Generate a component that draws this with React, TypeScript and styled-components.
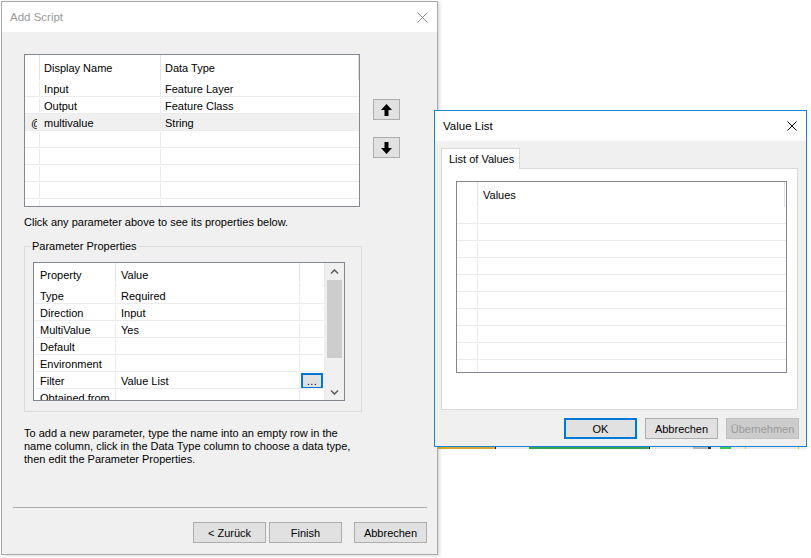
import React from 'react';
import styled, { createGlobalStyle } from 'styled-components';

const GlobalStyle = createGlobalStyle`
  * { box-sizing: border-box; }
  html, body { margin: 0; padding: 0; background: #ffffff; }
  body {
    font-family: "Liberation Sans", Arial, sans-serif;
    font-size: 11px;
    color: #000;
  }
`;

const Desktop = styled.div`
  position: relative;
  width: 811px;
  height: 558px;
  overflow: hidden;
  background: #fff;
`;

// windows sit on the desktop at their own coordinates
const Window = styled.div<{ $x: number; $y: number; $w: number; $h: number; $active?: boolean }>`
  position: absolute;
  left: ${p => p.$x}px;
  top: ${p => p.$y}px;
  width: ${p => p.$w}px;
  height: ${p => p.$h}px;
  display: flex;
  flex-direction: column;
  background: #f0f0f0;
  border: 1px solid ${p => (p.$active ? '#1883d7' : '#aaaaaa')};
  box-shadow: ${p => (p.$active ? 'none' : '2px 1px 3px rgba(0, 0, 0, 0.14)')};
`;

const TitleBar = styled.div<{ $active?: boolean }>`
  flex: none;
  height: 30px;
  display: flex;
  align-items: center;
  justify-content: space-between;
  padding: 0 9px 0 8px;
  background: #fff;
  color: ${p => (p.$active ? '#000' : '#999')};
  font-size: 11.5px;
`;

const CloseX = ({ size, color }: { size: number; color: string }) => (
  <svg width={size} height={size} viewBox={`0 0 ${size} ${size}`}>
    <path d={`M0.5 0.5 L${size - 0.5} ${size - 0.5} M${size - 0.5} 0.5 L0.5 ${size - 0.5}`} stroke={color} strokeWidth="1" />
  </svg>
);

const MainBody = styled.div`
  flex: 1;
  display: flex;
  flex-direction: column;
  padding: 22px 10px 0 11px;
`;

const TopSection = styled.div`
  display: flex;
  gap: 13px;
  margin-left: 11px;
`;

const ArrowStack = styled.div`
  display: flex;
  flex-direction: column;
  gap: 17px;
  padding-top: 45px;
`;

const ArrowButton = styled.div`
  width: 27px;
  height: 21px;
  border: 1px solid #adadad;
  background: #e1e1e1;
  display: flex;
  align-items: center;
  justify-content: center;
`;

const Caption = styled.div<{ $top: number }>`
  margin: ${p => p.$top}px 0 0 11px;
  line-height: 15px;
  white-space: nowrap;
`;

const HelpText = styled.div`
  margin: 15px 0 0 11px;
  line-height: 13px;
  white-space: nowrap;
`;

const GroupBox = styled.div`
  position: relative;
  margin: 16px 0 0 11px;
  width: 338px;
  height: 166px;
  border: 1px solid #dcdcdc;
  padding: 15px 0 0 8px;
`;

const GroupLabel = styled.span`
  position: absolute;
  top: -7px;
  left: 6px;
  padding: 0 1px;
  line-height: 13px;
  background: #f0f0f0;
`;

const Separator = styled.div`
  margin-top: 41px;
  height: 1px;
  background: #adadad;
`;

const ButtonRow = styled.div<{ $top: number; $right: number }>`
  display: flex;
  justify-content: flex-end;
  gap: 8px;
  margin-top: ${p => p.$top}px;
  padding-right: ${p => p.$right}px;
`;

const PushButton = styled.div<{ $focus?: boolean; $disabled?: boolean; $gapBefore?: number }>`
  width: 73px;
  height: 21px;
  flex: none;
  display: flex;
  align-items: center;
  justify-content: center;
  background: ${p => (p.$disabled ? '#cccccc' : '#e1e1e1')};
  border: ${p => (p.$focus ? '2px solid #0078d7' : `1px solid ${p.$disabled ? '#bfbfbf' : '#adadad'}`)};
  color: ${p => (p.$disabled ? '#9a9a9a' : '#000')};
  margin-left: ${p => p.$gapBefore ?? 0}px;
`;

/* data grids */
const GridBox = styled.div<{ $w: number; $h: number }>`
  flex: none;
  width: ${p => p.$w}px;
  height: ${p => p.$h}px;
  border: 1px solid #828790;
  background: #fff;
  overflow: hidden;
  display: flex;
`;

const GridColumn = styled.div`
  flex: 1;
  display: flex;
  flex-direction: column;
  min-width: 0;
`;

const HeaderRow = styled.div<{ $h: number }>`
  flex: none;
  display: flex;
  height: ${p => p.$h}px;
`;

const Row = styled.div<{ $selected?: boolean }>`
  flex: none;
  display: flex;
  height: 17px;
  padding-top: 1px;
  border-bottom: 1px solid #ececec;
  background: ${p => (p.$selected ? '#f0f0f0' : 'transparent')};
`;

const Cell = styled.div<{ $w?: number; $line?: 'head' | 'row'; $pad?: number }>`
  flex: ${p => (p.$w ? `0 0 ${p.$w}px` : '1 1 auto')};
  display: flex;
  align-items: center;
  padding-left: ${p => p.$pad ?? 4}px;
  border-right: ${p => (p.$line ? `1px solid ${p.$line === 'head' ? '#e3e3e3' : '#ececec'}` : 'none')};
  white-space: nowrap;
  overflow: hidden;
`;

const EditMark = styled.span`
  display: inline-block;
  width: 6px;
  overflow: hidden;
`;

const DotsButton = styled.div`
  width: 22px;
  height: 16px;
  margin: 0 0 0 1px;
  border: 2px solid #0078d7;
  background: #e1e1e1;
  display: flex;
  align-items: center;
  justify-content: center;
  line-height: 12px;
  font-size: 11px;
  letter-spacing: 0.5px;
`;

const ScrollBar = styled.div`
  flex: 0 0 19px;
  background: #f0f0f0;
  display: flex;
  flex-direction: column;
  align-items: center;
`;

const ScrollArrow = styled.div`
  flex: none;
  height: 17px;
  width: 100%;
  display: flex;
  align-items: center;
  justify-content: center;
`;

const ScrollThumb = styled.div`
  flex: none;
  width: 15px;
  height: 78px;
  background: #cdcdcd;
`;

const ScrollSpace = styled.div`
  flex: 1;
`;

const Chevron = ({ down }: { down?: boolean }) => (
  <svg width="9" height="6" viewBox="0 0 9 6">
    <path d={down ? 'M1 1.5 L4.5 5 L8 1.5' : 'M1 4.5 L4.5 1 L8 4.5'} stroke="#606060" strokeWidth="1.6" fill="none" />
  </svg>
);

const BlockArrow = ({ down }: { down?: boolean }) => (
  <svg width="11" height="12" viewBox="0 0 11 12">
    <path
      d={down ? 'M5.5 12 L0 6 L3.5 6 L3.5 0 L7.5 0 L7.5 6 L11 6 Z' : 'M5.5 0 L11 6 L7.5 6 L7.5 12 L3.5 12 L3.5 6 L0 6 Z'}
      fill="#000"
    />
  </svg>
);

/* value list */
const ValueBody = styled.div`
  flex: 1;
  display: flex;
  flex-direction: column;
  padding: 7px 0 0 6px;
`;

const TabStrip = styled.div`
  display: flex;
`;

const Tab = styled.div`
  position: relative;
  z-index: 1;
  width: 79px;
  height: 21px;
  margin-bottom: -1px;
  padding-left: 7px;
  display: flex;
  align-items: center;
  background: #fff;
  border: 1px solid #d9d9d9;
  border-bottom: none;
`;

const TabPanel = styled.div`
  width: 357px;
  height: 242px;
  background: #fff;
  border: 1px solid #d9d9d9;
  padding: 12px 0 0 14px;
`;

/* backdrop bits of the application behind */
const BackStrip = styled.div`
  position: absolute;
  left: 437px;
  top: 447px;
  width: 370px;
  height: 2px;
  display: flex;
`;

const StripPart = styled.div<{ $w: number; $c: string }>`
  flex: 0 0 ${p => p.$w}px;
  background: ${p => p.$c};
`;

const BackLine = styled.div`
  position: absolute;
  left: 437px;
  top: 448px;
  width: 1px;
  height: 58px;
  background: #d4a82a;
`;

const scriptRows = [
  { name: 'Input', type: 'Feature Layer' },
  { name: 'Output', type: 'Feature Class' },
  { name: 'multivalue', type: 'String', selected: true },
  { name: '', type: '' },
  { name: '', type: '' },
  { name: '', type: '' },
  { name: '', type: '' },
  { name: '', type: '' },
];

const props = [
  ['Type', 'Required'],
  ['Direction', 'Input'],
  ['MultiValue', 'Yes'],
  ['Default', ''],
  ['Environment', ''],
  ['Filter', 'Value List'],
  ['Obtained from', ''],
];

const strip: [number, string][] = [
  [58, '#d4a82a'], [1, '#111'], [33, '#ececec'], [120, '#3aa04e'], [1, '#111'],
  [43, '#ececec'], [15, '#b4b4b4'], [3, '#333'], [9, '#ececec'], [11, '#3cc84c'],
  [14, '#ececec'], [1, '#c8d42a'], [52, '#ececec'], [1, '#d4c82a'], [8, '#ececec'],
];

export default function App() {
  return (
    <Desktop>
      <GlobalStyle />
      <BackStrip>
        {strip.map(([w, c], i) => (
          <StripPart key={i} $w={w} $c={c} />
        ))}
      </BackStrip>
      <BackLine />

      <Window $x={1} $y={1} $w={437} $h={554}>
        <TitleBar>
          <span>Add Script</span>
          <CloseX size={11} color="#8c8c8c" />
        </TitleBar>
        <MainBody>
          <TopSection>
            <GridBox $w={336} $h={153}>
              <GridColumn>
                <HeaderRow $h={25}>
                  <Cell $w={15} $line="head" />
                  <Cell $w={121} $line="head">Display Name</Cell>
                  <Cell $w={198} $line="head">Data Type</Cell>
                </HeaderRow>
                {scriptRows.map((r, i) => (
                  <Row key={i} $selected={r.selected}>
                    <Cell $w={15} $line="row" $pad={6}>
                      {r.selected && <EditMark>@</EditMark>}
                    </Cell>
                    <Cell $w={121} $line="row">{r.name}</Cell>
                    <Cell $w={198}>{r.type}</Cell>
                  </Row>
                ))}
              </GridColumn>
            </GridBox>
            <ArrowStack>
              <ArrowButton><BlockArrow /></ArrowButton>
              <ArrowButton><BlockArrow down /></ArrowButton>
            </ArrowStack>
          </TopSection>

          <Caption $top={8}>Click any parameter above to see its properties below.</Caption>

          <GroupBox>
            <GroupLabel>Parameter Properties</GroupLabel>
            <GridBox $w={312} $h={139}>
              <GridColumn>
                <HeaderRow $h={24}>
                  <Cell $w={82} $line="head" $pad={6}>Property</Cell>
                  <Cell $w={184} $line="head" $pad={5}>Value</Cell>
                  <Cell $w={25} $line="head" />
                </HeaderRow>
                {props.map(([k, v]) => (
                  <Row key={k}>
                    <Cell $w={82} $line="row" $pad={6}>{k}</Cell>
                    <Cell $w={184} $line="row" $pad={5}>{v}</Cell>
                    <Cell $w={25} $line="row" $pad={0}>
                      {k === 'Filter' && <DotsButton>...</DotsButton>}
                    </Cell>
                  </Row>
                ))}
              </GridColumn>
              <ScrollBar>
                <ScrollArrow><Chevron /></ScrollArrow>
                <ScrollThumb />
                <ScrollSpace />
                <ScrollArrow><Chevron down /></ScrollArrow>
              </ScrollBar>
            </GridBox>
          </GroupBox>

          <HelpText>
            To add a new parameter, type the name into an empty row in the
            <br />
            name column, click in the Data Type column to choose a data type,
            <br />
            then edit the Parameter Properties.
          </HelpText>

          <Separator />

          <ButtonRow $top={14} $right={0}>
            <PushButton>&lt; Zurück</PushButton>
            <PushButton $gapBefore={-5}>Finish</PushButton>
            <PushButton $gapBefore={4}>Abbrechen</PushButton>
          </ButtonRow>
        </MainBody>
      </Window>

      <Window $x={434} $y={110} $w={373} $h={337} $active>
        <TitleBar $active>
          <span>Value List</span>
          <CloseX size={10} color="#000" />
        </TitleBar>
        <ValueBody>
          <TabStrip>
            <Tab>List of Values</Tab>
          </TabStrip>
          <TabPanel>
            <GridBox $w={331} $h={192}>
              <GridColumn>
                <HeaderRow $h={25}>
                  <Cell $w={21} $line="head" />
                  <Cell $line="head" $pad={5}>Values</Cell>
                  <Cell $w={1} $pad={0} />
                </HeaderRow>
                {Array.from({ length: 10 }).map((_, i) => (
                  <Row key={i}>
                    <Cell $w={21} $line="row" />
                    <Cell />
                  </Row>
                ))}
              </GridColumn>
            </GridBox>
          </TabPanel>
          <ButtonRow $top={8} $right={7}>
            <PushButton $focus>OK</PushButton>
            <PushButton>Abbrechen</PushButton>
            <PushButton $disabled>Übernehmen</PushButton>
          </ButtonRow>
        </ValueBody>
      </Window>
    </Desktop>
  );
}
